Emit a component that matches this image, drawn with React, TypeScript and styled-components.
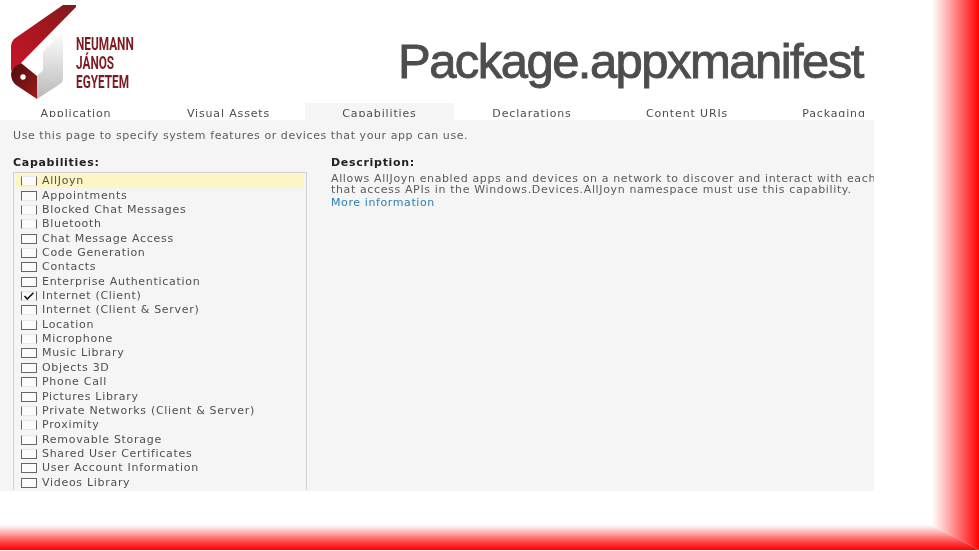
import React from "react";
import styled, { createGlobalStyle, css } from "styled-components";

const Global = createGlobalStyle`
  html, body { margin: 0; padding: 0; background: #fff; }
  #root { width: 979px; height: 551px; }
`;

const Slide = styled.div`
  position: relative;
  width: 979px;
  height: 551px;
  overflow: hidden;
  background: #fff;
  font-family: "DejaVu Sans", sans-serif;
`;

const Header = styled.header`
  display: flex;
  align-items: flex-start;
  height: 103px;
  width: 874px;
`;

const Brand = styled.div`
  display: flex;
  width: 398px;
  flex: none;
`;

const LogoMark = styled.svg`
  width: 76px;
  height: 103px;
  flex: none;
`;

const BrandName = styled.div`
  display: flex;
  flex-direction: column;
  padding-top: 34px;
  font-family: "Roboto", "Liberation Sans", sans-serif;
  font-weight: 700;
  font-size: 18px;
  line-height: 19px;
  color: #7d1a20;
  transform: scaleX(0.655);
  transform-origin: left top;
  filter: blur(0.3px);
  white-space: nowrap;
`;

const Title = styled.h1`
  margin: 36px 0 0;
  font-family: "Liberation Sans", Arial, sans-serif;
  font-weight: 400;
  font-size: 49px;
  line-height: 50px;
  letter-spacing: -1.55px;
  color: #4d4d4d;
  -webkit-text-stroke: 0.9px #4d4d4d;
  white-space: nowrap;
`;

const TabRow = styled.nav`
  display: flex;
  width: 874px;
  height: 17px;
`;

const Tab = styled.div<{ $w: number; $active?: boolean; $pad?: number }>`
  width: ${(p) => p.$w}px;
  flex: none;
  box-sizing: border-box;
  padding: 5px 0 0 ${(p) => p.$pad ?? 0}px;
  background: ${(p) => (p.$active ? "#f5f5f5" : "#fff")};
  text-align: center;
`;

const TabLabel = styled.div`
  height: 9px;
  overflow: hidden;
  font-size: 11px;
  line-height: 11px;
  letter-spacing: 0.85px;
  color: #4d4d4d;
  filter: blur(0.4px);
  white-space: nowrap;
`;

const Panel = styled.main`
  box-sizing: border-box;
  width: 874px;
  height: 371px;
  padding: 10px 0 0 13px;
  background: #f5f5f5;
  overflow: hidden;
`;

const Intro = styled.p`
  margin: 0 0 14px;
  font-size: 11px;
  line-height: 12px;
  letter-spacing: 0.58px;
  color: #5c5c5c;
  filter: blur(0.4px);
  white-space: nowrap;
`;

const Columns = styled.div`
  display: grid;
  grid-template-columns: 294px 1fr;
  column-gap: 24px;
`;

const Heading = styled.h2`
  margin: 0 0 3px;
  font-size: 11px;
  line-height: 13px;
  font-weight: 700;
  letter-spacing: 0.7px;
  color: #222;
  filter: blur(0.35px);
`;

const List = styled.ul`
  list-style: none;
  margin: 0;
  padding: 1px 2px 0;
  border: 1px solid #cfcfcf;
  border-bottom: 0;
  display: grid;
  grid-auto-rows: 14.36px;
`;

const Row = styled.li<{ $selected?: boolean }>`
  display: flex;
  align-items: center;
  gap: 5px;
  padding-left: 5px;
  background: ${(p) => (p.$selected ? "#fdf5c4" : "transparent")};
`;

type Edges = "full" | "sides" | "noTop" | "noBottom";

const Box = styled.span<{ $edges: Edges }>`
  box-sizing: border-box;
  display: flex;
  align-items: center;
  justify-content: center;
  flex: none;
  width: 16px;
  height: 10px;
  background: #fbfbfb;
  border: 1px solid #666;
  ${(p) =>
    (p.$edges === "sides" || p.$edges === "noTop") &&
    css`
      border-top-color: #e8e8e8;
    `}
  ${(p) =>
    (p.$edges === "sides" || p.$edges === "noBottom") &&
    css`
      border-bottom-color: #e8e8e8;
    `}
`;

const Check = styled.svg`
  width: 12px;
  height: 8px;
`;

const RowLabel = styled.span`
  font-size: 11px;
  line-height: 12px;
  letter-spacing: 0.7px;
  color: #505050;
  filter: blur(0.4px);
  white-space: nowrap;
`;

const DescBody = styled.div`
  padding-top: 1px;
`;

const DescText = styled.p`
  margin: 0;
  font-size: 11px;
  line-height: 11px;
  letter-spacing: 0.63px;
  color: #5c5c5c;
  filter: blur(0.4px);
  white-space: nowrap;
`;

const MoreLink = styled.a`
  display: block;
  height: 9px;
  margin-top: 2px;
  overflow: hidden;
  font-size: 11px;
  line-height: 11px;
  letter-spacing: 0.6px;
  color: #2a7fb8;
  filter: blur(0.35px);
`;

const RightBand = styled.div`
  position: absolute;
  top: 0;
  right: 0;
  width: 47px;
  height: 550px;
  background: linear-gradient(90deg, #fff 0%, #ffb8b8 30%, #ff5050 70%, #f00 100%);
  clip-path: polygon(0 0, 100% 0, 100% 100%, 0 525px);
`;

const BottomBand = styled.div`
  position: absolute;
  left: 0;
  top: 525px;
  width: 979px;
  height: 25px;
  background: linear-gradient(180deg, #fff 0%, #ffb0b0 30%, #ff4040 70%, #f00 100%);
  clip-path: polygon(0 0, 932px 0, 100% 100%, 0 100%);
`;

const capabilities: { name: string; edges: Edges; checked?: boolean }[] = [
  { name: "AllJoyn", edges: "sides" },
  { name: "Appointments", edges: "noBottom" },
  { name: "Blocked Chat Messages", edges: "sides" },
  { name: "Bluetooth", edges: "sides" },
  { name: "Chat Message Access", edges: "full" },
  { name: "Code Generation", edges: "noTop" },
  { name: "Contacts", edges: "full" },
  { name: "Enterprise Authentication", edges: "full" },
  { name: "Internet (Client)", edges: "sides", checked: true },
  { name: "Internet (Client & Server)", edges: "noBottom" },
  { name: "Location", edges: "noTop" },
  { name: "Microphone", edges: "sides" },
  { name: "Music Library", edges: "full" },
  { name: "Objects 3D", edges: "full" },
  { name: "Phone Call", edges: "noBottom" },
  { name: "Pictures Library", edges: "full" },
  { name: "Private Networks (Client & Server)", edges: "sides" },
  { name: "Proximity", edges: "sides" },
  { name: "Removable Storage", edges: "noTop" },
  { name: "Shared User Certificates", edges: "noTop" },
  { name: "User Account Information", edges: "full" },
  { name: "Videos Library", edges: "full" },
];

const tabs = [
  { label: "Application", w: 152 },
  { label: "Visual Assets", w: 153 },
  { label: "Capabilities", w: 149, active: true },
  { label: "Declarations", w: 156 },
  { label: "Content URIs", w: 154 },
  { label: "Packaging", w: 110, pad: 30 },
];

const Logo = () => (
  <LogoMark viewBox="0 0 76 103" aria-hidden="true">
    <defs>
      <linearGradient id="ribbon" x1="0" y1="1" x2="1" y2="0">
        <stop offset="0" stopColor="#c8142a" />
        <stop offset="0.55" stopColor="#a5171f" />
        <stop offset="1" stopColor="#7c1a1c" />
      </linearGradient>
      <linearGradient id="fold" x1="0" y1="0" x2="0" y2="1">
        <stop offset="0" stopColor="#ffffff" />
        <stop offset="1" stopColor="#b9b9b9" />
      </linearGradient>
      <linearGradient id="tag" x1="0" y1="0" x2="1" y2="1">
        <stop offset="0" stopColor="#4d0d0f" />
        <stop offset="1" stopColor="#9c1a1c" />
      </linearGradient>
    </defs>
    <path d="M37 99 L37 76 L43 70 L43 52 L63 31 L63 78 Q63 82 60 84 Z" fill="url(#fold)" />
    <path d="M63 5 L78 5 L21 63 L11 71 L11 46 Q11 42 14 39 Z" fill="url(#ribbon)" />
    <path d="M21 63 L37 76 L37 99 L16 85 Q11 81 11 74 Q11 68 21 63 Z" fill="url(#tag)" />
    <circle cx="23" cy="77" r="2.7" fill="#fff" />
  </LogoMark>
);

export default function App() {
  return (
    <Slide>
      <Global />
      <Header>
        <Brand>
          <Logo />
          <BrandName>
            <span>NEUMANN</span>
            <span>JÁNOS</span>
            <span>EGYETEM</span>
          </BrandName>
        </Brand>
        <Title>Package.appxmanifest</Title>
      </Header>
      <TabRow>
        {tabs.map((t) => (
          <Tab key={t.label} $w={t.w} $active={t.active} $pad={t.pad}>
            <TabLabel>{t.label}</TabLabel>
          </Tab>
        ))}
      </TabRow>
      <Panel>
        <Intro>Use this page to specify system features or devices that your app can use.</Intro>
        <Columns>
          <section>
            <Heading>Capabilities:</Heading>
            <List>
              {capabilities.map((c, i) => (
                <Row key={c.name} $selected={i === 0}>
                  <Box $edges={c.edges}>
                    {c.checked && (
                      <Check viewBox="0 0 12 9" aria-hidden="true">
                        <path d="M1 4.5 L4 8 L11 0.8" fill="none" stroke="#111" strokeWidth="1.7" />
                      </Check>
                    )}
                  </Box>
                  <RowLabel>{c.name}</RowLabel>
                </Row>
              ))}
            </List>
          </section>
          <section>
            <Heading>Description:</Heading>
            <DescBody>
              <DescText>Allows AllJoyn enabled apps and devices on a network to discover and interact with each</DescText>
              <DescText>that access APIs in the Windows.Devices.AllJoyn namespace must use this capability.</DescText>
              <MoreLink>More information</MoreLink>
            </DescBody>
          </section>
        </Columns>
      </Panel>
      <RightBand />
      <BottomBand />
    </Slide>
  );
}
